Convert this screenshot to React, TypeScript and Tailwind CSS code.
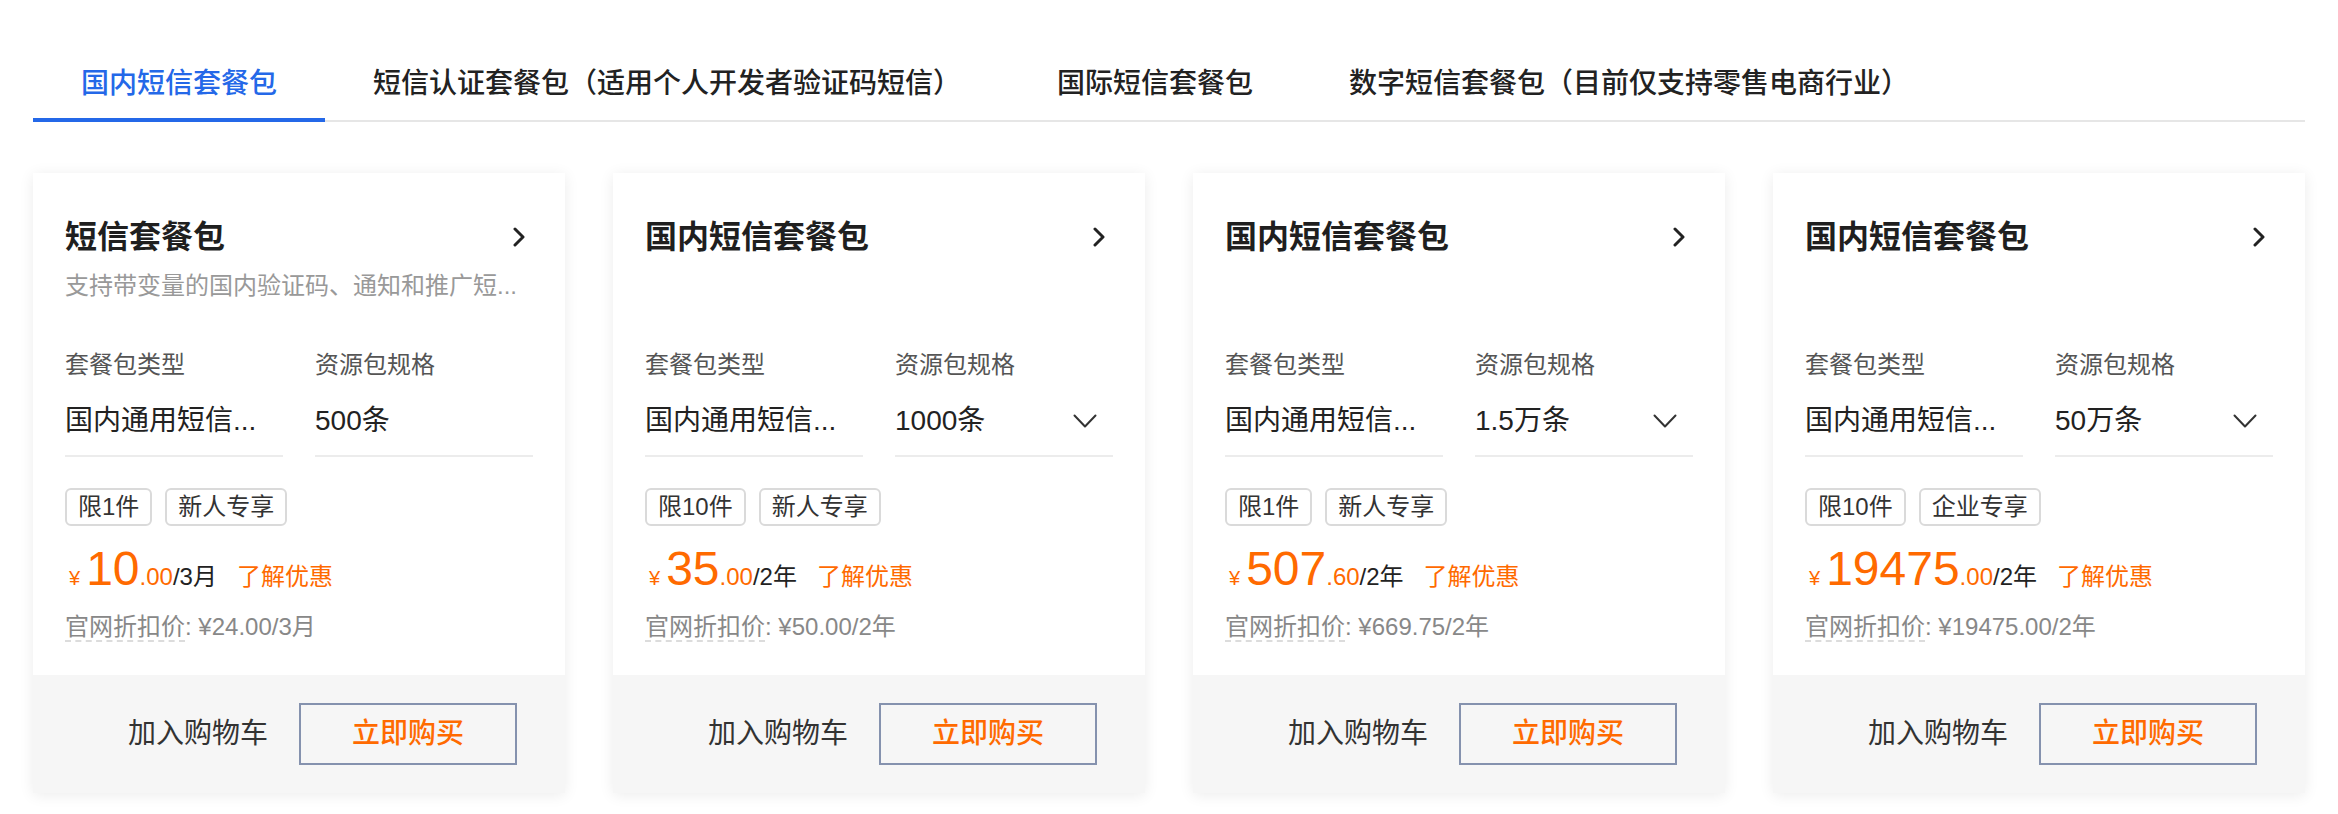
import React from "react";

type Card = {
  title: string;
  desc: string;
  type: string;
  spec: string;
  dropdown: boolean;
  tags: string[];
  int: string;
  dec: string;
  unit: string;
  orig: string;
};

const cards: Card[] = [
  {
    title: "短信套餐包",
    desc: "支持带变量的国内验证码、通知和推广短...",
    type: "国内通用短信...",
    spec: "500条",
    dropdown: false,
    tags: ["限1件", "新人专享"],
    int: "10",
    dec: ".00",
    unit: "/3月",
    orig: "¥24.00/3月",
  },
  {
    title: "国内短信套餐包",
    desc: "",
    type: "国内通用短信...",
    spec: "1000条",
    dropdown: true,
    tags: ["限10件", "新人专享"],
    int: "35",
    dec: ".00",
    unit: "/2年",
    orig: "¥50.00/2年",
  },
  {
    title: "国内短信套餐包",
    desc: "",
    type: "国内通用短信...",
    spec: "1.5万条",
    dropdown: true,
    tags: ["限1件", "新人专享"],
    int: "507",
    dec: ".60",
    unit: "/2年",
    orig: "¥669.75/2年",
  },
  {
    title: "国内短信套餐包",
    desc: "",
    type: "国内通用短信...",
    spec: "50万条",
    dropdown: true,
    tags: ["限10件", "企业专享"],
    int: "19475",
    dec: ".00",
    unit: "/2年",
    orig: "¥19475.00/2年",
  },
];

const tabs = [
  "国内短信套餐包",
  "短信认证套餐包（适用个人开发者验证码短信）",
  "国际短信套餐包",
  "数字短信套餐包（目前仅支持零售电商行业）",
];

function ChevronRight() {
  return (
    <svg width="12" height="20" viewBox="0 0 12 20" fill="none">
      <path d="M2 2 L10 10 L2 18" stroke="#222" strokeWidth="3" strokeLinecap="round" strokeLinejoin="round" />
    </svg>
  );
}

function ChevronDown() {
  return (
    <svg width="24" height="14" viewBox="0 0 24 14" fill="none">
      <path d="M1.5 1.5 L12 12.5 L22.5 1.5" stroke="#333" strokeWidth="2" strokeLinecap="round" strokeLinejoin="round" />
    </svg>
  );
}

function PackageCard({ c }: { c: Card }) {
  return (
    <div className="flex h-[620px] flex-col bg-white shadow-[0_2px_14px_rgba(0,0,0,0.08)]">
      <div className="px-[32px] pt-[42px]">
        <div className="flex h-[44px] items-center justify-between">
          <span className="text-[32px] font-semibold leading-[44px] text-[#1f1f1f]">{c.title}</span>
          <span className="mr-[8px] flex items-center">
            <ChevronRight />
          </span>
        </div>
        <div className="mt-[11px] h-[32px] whitespace-nowrap text-[24px] leading-[32px] text-[#999]">{c.desc}</div>
        <div className="mt-[47px] grid grid-cols-2 gap-x-[32px]">
          <div className="min-w-0">
            <div className="text-[24px] leading-[32px] text-[#555]">套餐包类型</div>
            <div className="mt-[20px] border-b-2 border-[#ececec] pb-[14px]">
              <div className="whitespace-nowrap text-[28px] leading-[40px] text-[#222]">{c.type}</div>
            </div>
          </div>
          <div className="min-w-0">
            <div className="text-[24px] leading-[32px] text-[#555]">资源包规格</div>
            <div className="mt-[20px] flex items-center justify-between border-b-2 border-[#ececec] pb-[14px]">
              <div className="whitespace-nowrap text-[28px] leading-[40px] text-[#222]">{c.spec}</div>
              {c.dropdown && (
                <span className="mr-[16px] flex items-center">
                  <ChevronDown />
                </span>
              )}
            </div>
          </div>
        </div>
        <div className="mt-[31px] flex gap-[13px]">
          {c.tags.map((t) => (
            <span
              key={t}
              className="flex h-[38px] items-center rounded-[6px] border-2 border-[#dadada] px-[11px] text-[24px] leading-[34px] text-[#333]"
            >
              {t}
            </span>
          ))}
        </div>
        <div className="mt-[19px] flex h-[48px] items-baseline whitespace-nowrap">
          <span className="ml-[4px] mr-[6px] text-[20px] text-[#ff6a00]">¥</span>
          <span className="text-[48px] leading-[48px] text-[#ff6a00]">{c.int}</span>
          <span className="text-[24px] text-[#ff6a00]">{c.dec}</span>
          <span className="text-[24px] text-[#222]">{c.unit}</span>
          <span className="ml-[20px] text-[24px] text-[#ff6a00]">了解优惠</span>
        </div>
        <div className="mt-[18px] whitespace-nowrap text-[24px] leading-[32px] text-[#888]">
          <span className="border-b-2 border-dashed border-[#dcdcdc]">官网折扣价</span>
          <span>: {c.orig}</span>
        </div>
      </div>
      <div className="mt-auto flex h-[118px] items-center justify-end gap-[31px] bg-[#f6f6f6] pr-[48px]">
        <span className="text-[28px] text-[#333]">加入购物车</span>
        <button className="flex h-[62px] w-[218px] items-center justify-center border-2 border-[#8592ae] text-[28px] font-medium text-[#ff6a00]">
          立即购买
        </button>
      </div>
    </div>
  );
}

export default function App() {
  return (
    <div
      className="min-h-screen bg-white"
      style={{ fontFamily: '"Liberation Sans", "Noto Sans CJK SC", sans-serif' }}
    >
      <div className="px-[33px] pt-[64px]">
        <div className="flex border-b-2 border-[#e6e6e6]">
          {tabs.map((t, i) => (
            <div
              key={t}
              className={`relative px-[48px] pb-[16px] text-[28px] font-medium leading-[40px] ${
                i === 0 ? "text-[#2468e8]" : "text-[#222]"
              }`}
            >
              {t}
              {i === 0 && <span className="absolute bottom-[-2px] left-0 right-0 h-[4px] bg-[#2468e8]" />}
            </div>
          ))}
        </div>
        <div className="mt-[51px] grid grid-cols-4 gap-[48px]">
          {cards.map((c, i) => (
            <PackageCard key={i} c={c} />
          ))}
        </div>
      </div>
    </div>
  );
}
